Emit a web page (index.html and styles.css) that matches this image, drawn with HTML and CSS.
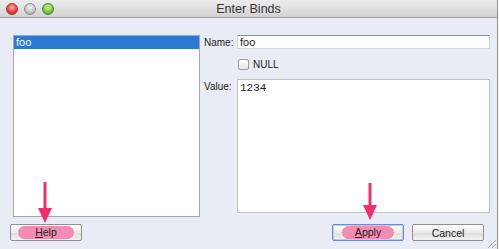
FILE: index.html
```html
<!DOCTYPE html>
<html lang="en">
<head>
    <meta charset="UTF-8">
    <title>Enter Binds</title>
    <link rel="stylesheet" href="styles.css">
</head>
<body>
    <div class="window">
        <div class="titlebar">
            <div class="lights">
                <span class="light red"></span>
                <span class="light gray"></span>
                <span class="light green"></span>
            </div>
            <div class="title">Enter Binds</div>
        </div>

        <div class="content">
            <div class="bind-list">
                <div class="bind-item selected">foo</div>
            </div>
            <div class="bind-form">
                <div class="row">
                    <label class="label">Name:</label>
                    <div class="field name-field">foo</div>
                </div>
                <div class="row null-row">
                    <span class="checkbox"></span>
                    <span class="null-text">NULL</span>
                </div>
                <div class="row value-row">
                    <label class="label">Value:</label>
                    <div class="field value-field">1234</div>
                </div>
            </div>
        </div>

        <div class="buttons">
            <button class="btn help-btn"><span class="mark"><u>H</u>elp</span></button>
            <div class="buttons-right">
                <button class="btn default-btn"><span class="mark"><u>A</u>pply</span></button>
                <button class="btn">Cancel</button>
            </div>
        </div>

        <svg class="arrow help-arrow" width="16" height="42" viewBox="0 0 16 42">
            <path d="M6.5 0 H9.5 V26 H15 L8 41 L1 26 H6.5 Z" fill="#ee2f68"/>
        </svg>
        <svg class="arrow apply-arrow" width="16" height="38" viewBox="0 0 16 38">
            <path d="M6.5 0 H9.5 V22 H15 L8 37 L1 22 H6.5 Z" fill="#ee2f68"/>
        </svg>
        <div class="grip"></div>
    </div>
</body>
</html>
```

FILE: styles.css
```css
body {
    margin: 0;
    padding: 0;
    background-color: #ffffff;
    font-family: 'Liberation Sans', Arial, sans-serif;
    font-size: 10px;
    color: #222;
}
.window {
    position: relative;
    width: 497px;
    height: 249px;
    background-color: #e9ecf5;
    border-right: 1px solid #8e8e8e;
    display: flex;
    flex-direction: column;
}
.titlebar {
    position: relative;
    height: 17px;
    background: linear-gradient(#ececec, #d3d3d3);
    border-bottom: 1px solid #9a9a9a;
    display: flex;
    align-items: center;
    justify-content: center;
}
.lights {
    position: absolute;
    left: 6px;
    top: 3px;
    display: flex;
    gap: 6px;
}
.light {
    width: 12px;
    height: 12px;
    border-radius: 50%;
    box-sizing: border-box;
}
.light.red {
    background: radial-gradient(circle at 50% 35%, #ffb3ae, #e5413a 55%, #b2201b);
    border: 1px solid #a63a36;
}
.light.gray {
    background: radial-gradient(circle at 50% 35%, #f4f4f4, #c8c8c8 55%, #9d9d9d);
    border: 1px solid #8e8e8e;
}
.light.green {
    background: radial-gradient(circle at 50% 35%, #d8f5b0, #7cc542 55%, #3e8d1a);
    border: 1px solid #4d8a2d;
}
.title {
    font-size: 12.5px;
    color: #333;
}
.content {
    display: flex;
    padding: 17px 0 0 13px;
    height: 182px;
}
.bind-list {
    width: 185px;
    height: 180px;
    background-color: #fff;
    border: 1px solid #a6a6a6;
}
.bind-item {
    height: 13px;
    line-height: 13px;
    padding-left: 2px;
    font-size: 11px;
}
.bind-item.selected {
    background-color: #2b79d0;
    color: #fff;
}
.bind-form {
    display: flex;
    flex-direction: column;
    margin-left: 4px;
}
.row {
    display: flex;
}
.label {
    width: 33px;
    padding-top: 2px;
    font-size: 10px;
}
.field {
    box-sizing: border-box;
    width: 253px;
    background-color: #fff;
    font-size: 11px;
    padding-left: 2px;
}
.name-field {
    height: 14px;
    line-height: 12px;
    border: 1px solid #d4d7dc;
    border-top: 1px solid #8e9196;
}
.null-row {
    margin: 10px 0 0 34px;
    align-items: center;
    gap: 4px;
}
.checkbox {
    width: 9px;
    height: 9px;
    background: linear-gradient(#fdfdfd, #e6e6e6);
    border: 1px solid #9a9a9a;
    border-radius: 2px;
}
.null-text {
    font-size: 10px;
}
.value-row {
    margin-top: 9px;
}
.value-field {
    height: 134px;
    border: 1px solid #c0c2c6;
    padding-top: 2px;
    line-height: 13px;
    font-family: 'Liberation Mono', 'Courier New', monospace;
}
.buttons {
    display: flex;
    justify-content: space-between;
    padding: 7px 13px 0 10px;
}
.buttons-right {
    display: flex;
    gap: 8px;
}
.btn {
    width: 72px;
    height: 17px;
    padding: 0;
    font-family: 'Liberation Sans', Arial, sans-serif;
    font-size: 10.5px;
    color: #222;
    background: linear-gradient(#ffffff, #e9e9e9 50%, #dcdcdc 51%, #f2f2f2);
    border: 1px solid #8f8f8f;
    border-radius: 2px;
    display: flex;
    align-items: center;
    justify-content: center;
}
.default-btn {
    border-color: #6b8fc4;
    box-shadow: inset 0 0 0 1px #b9cdef;
}
.mark {
    background-color: #f28cb3;
    border-radius: 7px;
    padding: 1px 13px;
    line-height: 11px;
}
.help-btn .mark {
    padding: 1px 17px;
}
.arrow {
    position: absolute;
}
.help-arrow {
    left: 37px;
    top: 182px;
}
.apply-arrow {
    left: 362px;
    top: 183px;
}
.grip {
    position: absolute;
    right: 1px;
    bottom: 1px;
    width: 8px;
    height: 8px;
    background: linear-gradient(135deg, transparent 45%, #a8a8a8 45%, #a8a8a8 52%, transparent 52%, transparent 70%, #a8a8a8 70%, #a8a8a8 77%, transparent 77%);
}
```
